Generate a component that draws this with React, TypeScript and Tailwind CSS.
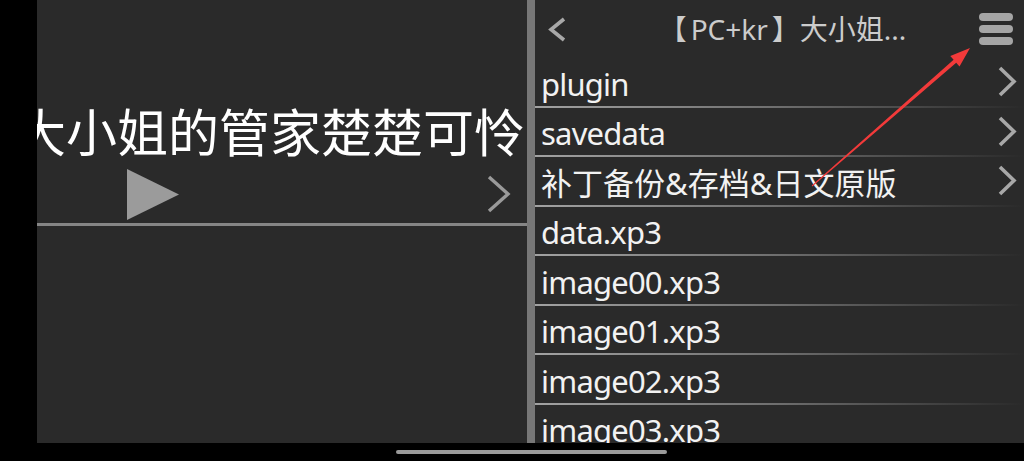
import React from "react"

const files = [
  { name: "plugin", dir: true },
  { name: "savedata", dir: true },
  { name: "补丁备份&存档&日文原版", dir: true },
  { name: "data.xp3", dir: false },
  { name: "image00.xp3", dir: false },
  { name: "image01.xp3", dir: false },
  { name: "image02.xp3", dir: false },
  { name: "image03.xp3", dir: false },
]

function Chevron({ className, dir = "right" }: { className?: string; dir?: "left" | "right" }) {
  const pts = dir === "right" ? "2,2 16,15.5 2,29" : "16,2 3,12.5 16,23"
  return (
    <svg viewBox={dir === "right" ? "0 0 19 31" : "0 0 18 25"} className={className} fill="none">
      <polyline points={pts} stroke="currentColor" strokeWidth="3.6" strokeLinecap="butt" strokeLinejoin="miter" />
    </svg>
  )
}

function FileRow({ name, dir }: { name: string; dir: boolean }) {
  const latin = /^[\x00-\x7f]+$/.test(name)
  return (
    <div className="h-[49.5px] shrink-0 flex flex-col">
      <div className="h-[47.5px] shrink-0 flex items-center justify-between pl-[6px] pr-[7px] overflow-hidden">
        <span
          className={
            latin
              ? "text-[31px] leading-[40px] mt-[4px] text-[#f2f2f2] whitespace-nowrap tracking-[-0.8px]"
              : "text-[31px] leading-[40px] mt-[4px] text-[#f2f2f2] whitespace-nowrap"
          }
        >
          {name}
        </span>
        {dir && <Chevron className="w-[19px] h-[31px] text-[#a8a8a8]" />}
      </div>
      <div className="h-[2px] shrink-0 bg-linear-to-r from-[#a2a2a2] via-[#6e6e6e] to-[#2a2a2a]" />
    </div>
  )
}

export default function App() {
  return (
    <div className="w-[1024px] h-[461px] bg-black flex flex-col font-['Noto_Sans','Noto_Sans_CJK_SC',sans-serif] relative overflow-hidden">
      <div className="h-[443px] flex pl-[37px]">
        {/* left: selected game */}
        <section className="w-[490px] bg-[#2a2a2a] flex flex-col pt-[99px]">
          <div className="h-[66px] overflow-hidden flex justify-end items-center pr-[2px]">
            <span className="whitespace-nowrap text-[51px] leading-none text-white">大小姐的管家楚楚可怜</span>
          </div>
          <div className="h-[58px] flex items-center justify-between pl-[90px] pr-[16px]">
            <svg viewBox="0 0 52 51" className="w-[52px] h-[51px]">
              <polygon points="0,0 52,25.5 0,51" fill="#9b9b9b" />
            </svg>
            <svg viewBox="0 0 24 38" className="w-[24px] h-[38px]" fill="none">
              <polyline points="2,2 21,19 2,36" stroke="#9a9a9a" strokeWidth="3.4" />
            </svg>
          </div>
          <div className="h-[3px] bg-[#858585]" />
        </section>

        <div className="w-[8px] bg-[#777777]" />

        {/* right: file list */}
        <section className="flex-1 bg-[#2a2a2a] flex flex-col overflow-hidden">
          <header className="h-[58px] shrink-0 flex items-center pl-[13px] pr-[11px]">
            <Chevron dir="left" className="w-[18px] h-[25px] text-[#a8a8a8]" />
            <div className="flex-1 flex justify-center pl-[20px]">
              <span className="text-[28px] leading-[36px] text-[#cccccc] whitespace-nowrap">
                【<span className="px-[4px]">PC+kr</span>】大小姐...
              </span>
            </div>
            <div className="flex flex-col gap-[4px]">
              <div className="w-[34px] h-[8px] rounded-[4px] bg-[#a5a5a5]" />
              <div className="w-[34px] h-[8px] rounded-[4px] bg-[#a5a5a5]" />
              <div className="w-[34px] h-[8px] rounded-[4px] bg-[#a5a5a5]" />
            </div>
          </header>
          {files.map((f) => (
            <FileRow key={f.name} name={f.name} dir={f.dir} />
          ))}
        </section>
      </div>

      <div className="flex-1 pl-[396px] pt-[7px]">
        <div className="w-[271px] h-[4px] rounded-full bg-[#9a9a9a]" />
      </div>

      {/* red annotation arrow */}
      <svg className="absolute left-0 top-0 w-[1024px] h-[461px] pointer-events-none" viewBox="0 0 1024 461">
        <polygon
          points="811.7,185.6 953.6,59.7 950.3,55.9 970,48 959.5,66.5 956.2,62.7 812.3,186.4"
          fill="#f23a3a"
        />
      </svg>
    </div>
  )
}
